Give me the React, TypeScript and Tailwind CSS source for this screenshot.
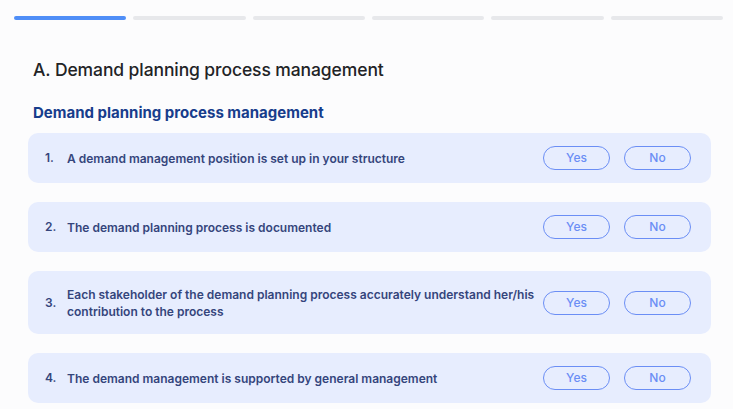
import React from "react";

const questions = [
  { n: "1.", text: "A demand management position is set up in your structure", tall: false },
  { n: "2.", text: "The demand planning process is documented", tall: false },
  {
    n: "3.",
    text: "Each stakeholder of the demand planning process accurately understand her/his contribution to the process",
    tall: true,
  },
  { n: "4.", text: "The demand management is supported by general management", tall: false },
];

export default function App() {
  return (
    <div
      className="w-[733px] h-[409px] overflow-hidden bg-[#fcfcfd]"
      style={{ fontFamily: "Inter, 'Noto Sans', sans-serif" }}
    >
      <div className="flex gap-[7px] pl-[14px] pr-[10px] pt-[16px]">
        <div className="h-[4px] flex-1 rounded-full bg-[#4f8ef7]" />
        <div className="h-[4px] flex-1 rounded-full bg-[#e7e8eb]" />
        <div className="h-[4px] flex-1 rounded-full bg-[#e7e8eb]" />
        <div className="h-[4px] flex-1 rounded-full bg-[#e7e8eb]" />
        <div className="h-[4px] flex-1 rounded-full bg-[#e7e8eb]" />
        <div className="h-[4px] flex-1 rounded-full bg-[#e7e8eb]" />
      </div>
      <div className="pl-[28px] pr-[22px]">
        <h1 className="mt-[38px] pl-[5px] text-[17.5px] leading-[24px] font-medium text-[#222326] tracking-[-0.1px]">
          A. Demand planning process management
        </h1>
        <h2 className="mt-[21px] pl-[5px] text-[15px] leading-[20px] font-bold text-[#173d8c]">
          Demand planning process management
        </h2>
        <div className="mt-[10px] flex flex-col gap-[19px]">
          {questions.map((q) => (
            <div
              key={q.n}
              className={`flex items-center rounded-[10px] bg-[#e7edfe] pl-[17px] pr-[20px] ${
                q.tall ? "h-[63px]" : "h-[50px]"
              }`}
            >
              <span className="w-[22px] shrink-0 text-[12px] font-semibold text-[#35457c]">{q.n}</span>
              <span className="w-[475px] text-[12px] leading-[17px] font-semibold text-[#35457c]">
                {q.text}
              </span>
              <div className="ml-auto flex gap-[14px]">
                <button className="h-[24px] w-[67px] rounded-full border-[1.5px] border-[#6b8ef5] text-[12px] font-medium text-[#6b8ef5]">
                  Yes
                </button>
                <button className="h-[24px] w-[67px] rounded-full border-[1.5px] border-[#6b8ef5] text-[12px] font-medium text-[#6b8ef5]">
                  No
                </button>
              </div>
            </div>
          ))}
        </div>
      </div>
    </div>
  );
}
